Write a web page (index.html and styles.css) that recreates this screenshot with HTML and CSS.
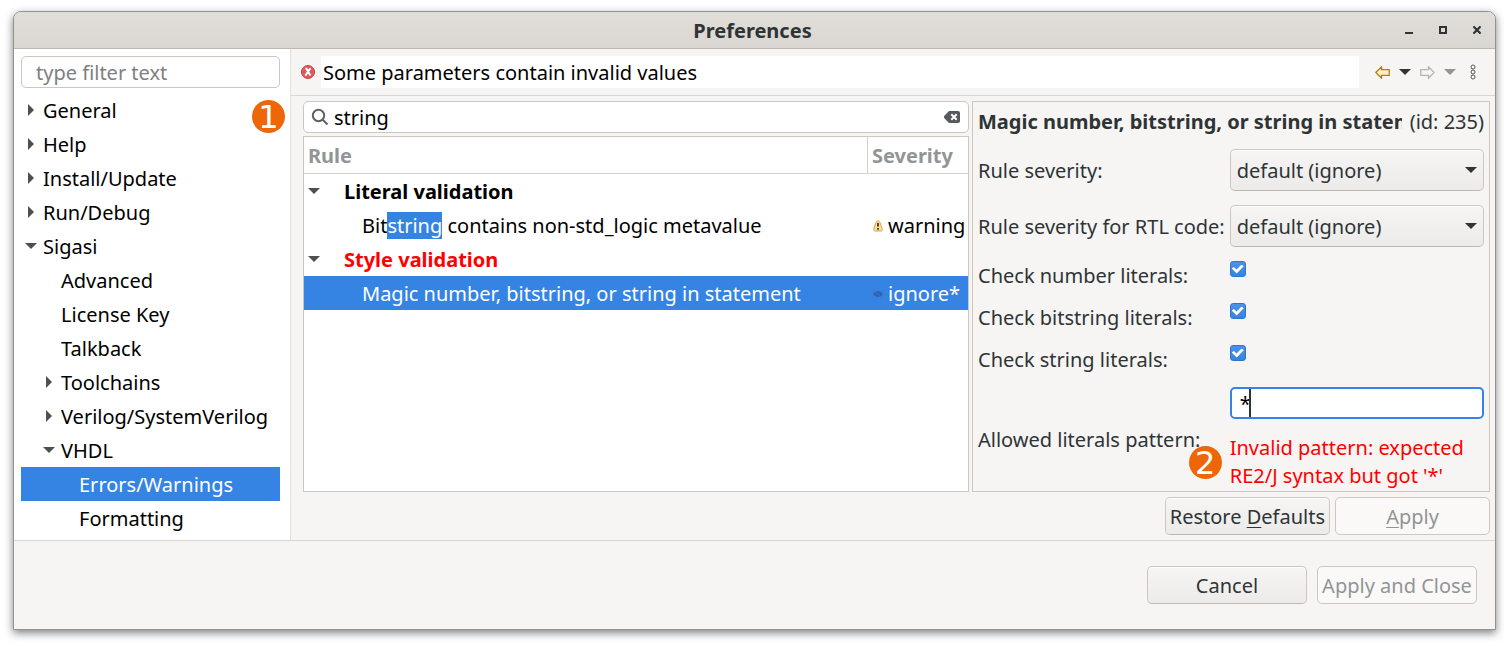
FILE: index.html
```html
<!DOCTYPE html>
<html lang="en">
<head>
<meta charset="utf-8">
<title>Preferences</title>
<link rel="stylesheet" href="styles.css">
</head>
<body>
<div class="window">
  <header class="titlebar">
    <h1 class="titlebar-title">Preferences</h1>
    <div class="window-controls">
      <button type="button" class="plain" aria-label="Minimize"><svg width="8" height="8" viewBox="0 0 8 8"><path d="M0 6h8v2H0z" fill="#2e3436"/></svg></button>
      <button type="button" class="plain" aria-label="Maximize"><svg width="8" height="8" viewBox="0 0 8 8"><path d="M1 1h6v6H1z" fill="none" stroke="#2e3436" stroke-width="2"/></svg></button>
      <button type="button" class="plain" aria-label="Close"><svg width="8" height="8" viewBox="0 0 8 8"><path d="M.4.4l7.200 7.200M7.600.4L.4 7.600" fill="none" stroke="#2e3436" stroke-width="2.200"/></svg></button>
    </div>
  </header>

  <div class="content">
    <nav class="sidebar" aria-label="Preference pages">
      <input class="field filter" type="text" placeholder="type filter text" aria-label="Filter pages">
      <ul class="tree">
        <li><a class="node" href="#general"><span class="slot"><i class="arrow right"></i></span>General</a></li>
        <li><a class="node" href="#help"><span class="slot"><i class="arrow right"></i></span>Help</a></li>
        <li><a class="node" href="#install"><span class="slot"><i class="arrow right"></i></span>Install/Update</a></li>
        <li><a class="node" href="#run"><span class="slot"><i class="arrow right"></i></span>Run/Debug</a></li>
        <li><a class="node" href="#sigasi"><span class="slot"><i class="arrow down"></i></span>Sigasi</a>
          <ul class="tree level-2">
            <li><a class="node" href="#advanced"><span class="slot"></span>Advanced</a></li>
            <li><a class="node" href="#license"><span class="slot"></span>License Key</a></li>
            <li><a class="node" href="#talkback"><span class="slot"></span>Talkback</a></li>
            <li><a class="node" href="#toolchains"><span class="slot"><i class="arrow right"></i></span>Toolchains</a></li>
            <li><a class="node" href="#verilog"><span class="slot"><i class="arrow right"></i></span>Verilog/SystemVerilog</a></li>
            <li><a class="node" href="#vhdl"><span class="slot"><i class="arrow down"></i></span>VHDL</a>
              <ul class="tree level-3">
                <li><a class="node selected" href="#errors" aria-current="page"><span class="slot"></span>Errors/Warnings</a></li>
                <li><a class="node" href="#formatting"><span class="slot"></span>Formatting</a></li>
              </ul>
            </li>
          </ul>
        </li>
      </ul>
      <span class="badge badge-search">1</span>
    </nav>

    <main class="main">
      <div class="message-bar">
        <svg class="error-icon" width="14" height="14" viewBox="0 0 14 14"><circle cx="7" cy="7" r="6.500" fill="#dc5a5e" stroke="#cf4045"/><path d="M4.200 3.600h1.200c1.600 2.400 1.800 4.400 4.200 6.800M9.600 3.400C7.600 4.600 6.600 8.400 4.200 10.600" fill="none" stroke="#fff" stroke-width="1.900"/></svg>
        <p class="message">Some parameters contain invalid values</p>
        <div class="history">
          <button type="button" class="plain" aria-label="Back"><svg width="15" height="13" viewBox="0 0 15 13"><path d="M.8 6.500L6.500.8V3.600h7.700v5.800H6.500v2.800z" fill="#fdf3c0" stroke="#b87a14" stroke-width="1.300"/></svg></button>
          <button type="button" class="plain" aria-label="Back history"><i class="arrow down dark"></i></button>
          <button type="button" class="plain" aria-label="Forward" disabled><svg width="15" height="13" viewBox="0 0 15 13"><path d="M14.200 6.500L8.500.8V3.600H.8v5.800h7.700v2.800z" fill="#f6f5f4" stroke="#b4b4b4" stroke-width="1.300"/></svg></button>
          <button type="button" class="plain" aria-label="Forward history" disabled><i class="arrow down dim"></i></button>
          <button type="button" class="plain menu" aria-label="View menu"><svg width="6" height="16" viewBox="0 0 6 16"><g fill="#fff" stroke="#555"><circle cx="3" cy="3" r="2"/><circle cx="3" cy="8" r="2"/><circle cx="3" cy="13" r="2"/></g></svg></button>
        </div>
      </div>

      <div class="page">
        <section class="rules">
          <div class="search field">
            <svg width="18" height="18" viewBox="0 0 18 18" fill="none" stroke="#5c6163" stroke-width="2"><circle cx="7.500" cy="7.500" r="5.700"/><path d="M11.500 11.500l5 5"/></svg>
            <input type="text" value="string" aria-label="Search rules">
            <button type="button" class="plain" aria-label="Clear search"><svg width="16" height="12" viewBox="0 0 16 12"><path d="M5 0h9a2 2 0 0 1 2 2v8a2 2 0 0 1-2 2H5L.6 7.400a2 2 0 0 1 0-2.800z" fill="#555b5d"/><path d="M7.300 3.300l5.400 5.400M12.700 3.300L7.300 8.700" stroke="#fff" stroke-width="2"/></svg></button>
          </div>
          <div class="table-box">
            <table class="rule-table">
              <thead>
                <tr><th scope="col">Rule</th><th scope="col" class="severity">Severity</th></tr>
              </thead>
              <tbody>
                <tr class="group"><td><i class="arrow down"></i>Literal validation</td><td></td></tr>
                <tr><td class="child">Bit<mark>string</mark> contains non-std_logic metavalue</td>
                  <td><svg class="level-icon" width="10" height="12" viewBox="0 0 10 12"><path d="M5 .7c1 0 1.600.8 2 2l2.200 5.800c.5 1.500 0 2.500-1.400 2.500H2.200C.8 11 .3 10 .8 8.500L3 2.700c.4-1.200 1-2 2-2z" fill="#fbe09a" stroke="#dca04c"/><path d="M5 3v3.500M5 8v1.800" stroke="#4a3510" stroke-width="1.800"/></svg>warning</td></tr>
                <tr class="group invalid"><td><i class="arrow down"></i>Style validation</td><td></td></tr>
                <tr class="selected"><td class="child">Magic number, bitstring, or string in statement</td>
                  <td><svg class="level-icon" width="10" height="12" viewBox="0 0 10 12"><path d="M0 6c2-4 8-4 10 0-2 4-8 4-10 0z" fill="#2d62bd"/><path d="M.5 1.500l9 9" stroke="#54749f"/></svg>ignore*</td></tr>
              </tbody>
            </table>
          </div>
        </section>

        <section class="details">
          <div class="details-head"><h2>Magic number, bitstring, or string in statement</h2><span class="rule-id">(id: 235)</span></div>
          <label for="sev">Rule severity:</label>
          <div class="select"><select id="sev"><option>default (ignore)</option></select><i class="arrow down dark"></i></div>
          <label for="sev-rtl">Rule severity for RTL code:</label>
          <div class="select"><select id="sev-rtl"><option>default (ignore)</option></select><i class="arrow down dark"></i></div>
          <label for="num">Check number literals:</label>
          <input id="num" class="check" type="checkbox" checked>
          <label for="bit">Check bitstring literals:</label>
          <input id="bit" class="check" type="checkbox" checked>
          <label for="str">Check string literals:</label>
          <input id="str" class="check" type="checkbox" checked>
          <label for="pattern">Allowed literals pattern:</label>
          <div class="pattern">
            <input id="pattern" class="field focused" type="text" value="*">
            <span class="caret"></span>
            <p class="error">Invalid pattern: expected RE2/J syntax but got '*'</p>
            <span class="badge badge-pattern">2</span>
          </div>
        </section>
      </div>

      <div class="page-actions">
        <button type="button" class="button">Restore <u>D</u>efaults</button>
        <button type="button" class="button apply" disabled><u>A</u>pply</button>
      </div>
    </main>
  </div>

  <footer class="footer">
    <button type="button" class="button">Cancel</button>
    <button type="button" class="button" disabled>Apply and Close</button>
  </footer>
</div>
</body>
</html>
```

FILE: styles.css
```css
* {
  box-sizing: border-box;
}

body {
  margin: 0;
  padding: 11px 13px 16px;
  min-height: 100vh;
  display: flex;
  background: #fff;
  color: #2e3436;
  font: 20px/28px "Noto Sans", sans-serif;
}

h1, h2, p, ul {
  margin: 0;
  padding: 0;
  font-size: inherit;
}

ul {
  list-style: none;
}

input, select, button {
  font: inherit;
  color: inherit;
  margin: 0;
}

.plain {
  display: flex;
  align-items: center;
  padding: 0;
  border: 0;
  background: none;
}

.window {
  flex: 1;
  min-width: 0;
  display: flex;
  flex-direction: column;
  background: #f6f5f4;
  border: 1px solid #929292;
  border-radius: 8px 8px 0 0;
  box-shadow: 0 3px 9px rgba(0, 0, 0, 0.5);
}

/* Title bar */
.titlebar {
  display: grid;
  grid-template-columns: 1fr auto 1fr;
  align-items: center;
  height: 37px;
  padding-right: 14px;
  padding-left: 10px;
  border-bottom: 1px solid #bfb8b1;
  border-radius: 7px 7px 0 0;
  background: linear-gradient(#e1deda, #dad6d2);
}

.titlebar-title {
  grid-column: 2;
  padding-top: 2px;
}

.window-controls {
  display: flex;
  justify-content: flex-end;
  gap: 26px;
}

/* Arrows */
.arrow {
  display: inline-block;
  flex: none;
  background: #4d4f50;
}

.arrow.right {
  width: 6px;
  height: 12px;
  clip-path: polygon(0 0, 100% 50%, 0 100%);
}

.arrow.down {
  width: 12px;
  height: 6px;
  clip-path: polygon(0 0, 100% 0, 50% 100%);
}

.arrow.dark {
  background: #2e3436;
}

.arrow.dim {
  background: #929595;
}

/* Fields */
.field {
  width: 100%;
  height: 32px;
  border: 1px solid #cdc7c2;
  border-radius: 5px;
  background: #fff;
  color: #000;
  outline: 0;
}

/* Sidebar */
.content {
  flex: 1;
  display: grid;
  grid-template-columns: 277px minmax(0, 1fr);
  border-bottom: 1px solid #dad8d6;
}

.sidebar {
  position: relative;
  padding: 7px 10px 5px 7px;
  border-right: 1px solid #e4e2e0;
  background: #fff;
  color: #000;
}

.filter {
  display: block;
  margin-bottom: 5px;
  padding: 0 14px;
}

.filter::placeholder {
  color: #808080;
}

.node {
  display: flex;
  gap: 6px;
  height: 34px;
  padding-left: 4px;
  color: inherit;
  line-height: 36px;
  text-decoration: none;
  white-space: nowrap;
}

.level-2 .node {
  padding-left: 22px;
}

.level-3 .node {
  padding-left: 40px;
}

.slot {
  display: flex;
  align-items: center;
  justify-content: center;
  width: 12px;
}

.selected {
  background: #3584e4;
  color: #fff;
}

.badge {
  position: absolute;
  width: 33px;
  height: 33px;
  border-radius: 50%;
  background: #ed6709;
  color: #fff;
  font: 32px/34px "DejaVu Sans", sans-serif;
  text-align: center;
}

.badge-search {
  top: 51px;
  right: 5px;
}

.badge-pattern {
  top: 59px;
  left: -41px;
}

/* Main pane */
.main {
  display: flex;
  flex-direction: column;
}

.message-bar {
  display: flex;
  align-items: center;
  height: 47px;
  padding: 0 19px 0 10px;
  border-bottom: 1px solid #dad8d6;
}

.message {
  flex: 1;
  margin: 0 16px 0 6px;
  padding: 3px 2px 1px;
  background: #fff;
  color: #000;
}

.history {
  display: flex;
  align-items: center;
  gap: 9px;
}

.menu {
  margin-left: 5px;
}

.page {
  flex: 1;
  display: grid;
  grid-template-columns: minmax(0, 666fr) minmax(0, 518fr);
  gap: 3px;
  padding: 5px 5px 0 12px;
}

.rules {
  display: flex;
  flex-direction: column;
  gap: 3px;
}

.search {
  display: flex;
  align-items: center;
  gap: 5px;
  padding: 0 8px 0 7px;
}

.search input {
  flex: 1;
  min-width: 0;
  padding: 2px 0 0;
  border: 0;
  background: none;
  outline: 0;
}

.table-box {
  flex: 1;
  border: 1px solid #cdc7c2;
  background: #fff;
  color: #000;
}

.rule-table {
  width: 100%;
  table-layout: fixed;
  border-collapse: separate;
  border-spacing: 0;
}

.rule-table th {
  height: 37px;
  padding: 2px 4px 0;
  border-bottom: 1px solid #d5d0cc;
  color: #929595;
  text-align: left;
}

.rule-table .severity {
  width: 101px;
  border-left: 1px solid #d5d0cc;
}

.rule-table td {
  height: 34px;
  padding: 2px 0 0 4px;
  white-space: nowrap;
}

.rule-table .child {
  padding-left: 58px;
}

.rule-table .arrow {
  margin-right: 24px;
  vertical-align: 5px;
}

.group {
  font-weight: bold;
}

.invalid,
.error {
  color: #f00;
}

.level-icon {
  margin: 0 5px 0 2px;
  vertical-align: 1px;
}

mark {
  background: #3584e4;
  color: #fff;
}

/* Rule details */
.details {
  display: grid;
  grid-template-columns: max-content minmax(0, 1fr);
  align-content: start;
  align-items: center;
  gap: 14px 5px;
  padding: 5px 5px 1px;
  border: 1px solid #cdc7c2;
}

.details label {
  height: 28px;
  line-height: 30px;
}

.details-head {
  grid-column: 1 / -1;
  display: flex;
  gap: 8px;
  height: 28px;
  line-height: 30px;
  white-space: nowrap;
}

.details-head h2 {
  flex: 1;
  min-width: 0;
  overflow: hidden;
}

.select {
  position: relative;
}

.select select {
  display: block;
  width: 100%;
  height: 42px;
  padding: 2px 6px 0;
  appearance: none;
  border: 1px solid #cdc7c2;
  border-bottom-color: #bfb8b1;
  border-radius: 5px;
  background: linear-gradient(#f6f5f4, #edebe9);
  box-shadow: inset 0 1px #fff;
}

.select .arrow {
  position: absolute;
  top: 18px;
  right: 7px;
  pointer-events: none;
}

.check {
  align-self: start;
  display: grid;
  place-items: center;
  width: 16px;
  height: 16px;
  appearance: none;
  border: 1px solid #2a76d2;
  border-radius: 3px;
  background: linear-gradient(#4b92e8, #3584e4);
}

.check::before {
  content: "";
  width: 12px;
  height: 9px;
  background: #fff;
  clip-path: polygon(0 45%, 18% 28%, 40% 55%, 82% 0, 100% 20%, 42% 100%);
}

.pattern {
  position: relative;
}

.pattern .field {
  display: block;
  margin-bottom: 15px;
  padding: 0 8px;
}

.focused {
  border: 2px solid #3584e4;
}

.caret {
  position: absolute;
  top: 2px;
  left: 19px;
  width: 2px;
  height: 28px;
  background: #2e3436;
}

/* Buttons */
.button {
  height: 38px;
  min-width: 160px;
  padding: 2px 4px 0;
  border: 1px solid #cdc7c2;
  border-bottom-color: #bfb8b1;
  border-radius: 5px;
  background: linear-gradient(#f6f5f4, #edebe9);
  box-shadow: inset 0 1px #fff;
  white-space: nowrap;
}

.button:disabled {
  border-color: #cdc7c2;
  background: #faf9f8;
  box-shadow: none;
  color: #929595;
}

u {
  text-decoration-thickness: 1px;
  text-underline-offset: 3px;
}

.page-actions {
  display: flex;
  justify-content: flex-end;
  gap: 5px;
  padding: 5px 5px 5px 12px;
}

.apply {
  min-width: 155px;
}

.footer {
  display: flex;
  justify-content: flex-end;
  gap: 10px;
  padding: 25px 18px;
}
```
